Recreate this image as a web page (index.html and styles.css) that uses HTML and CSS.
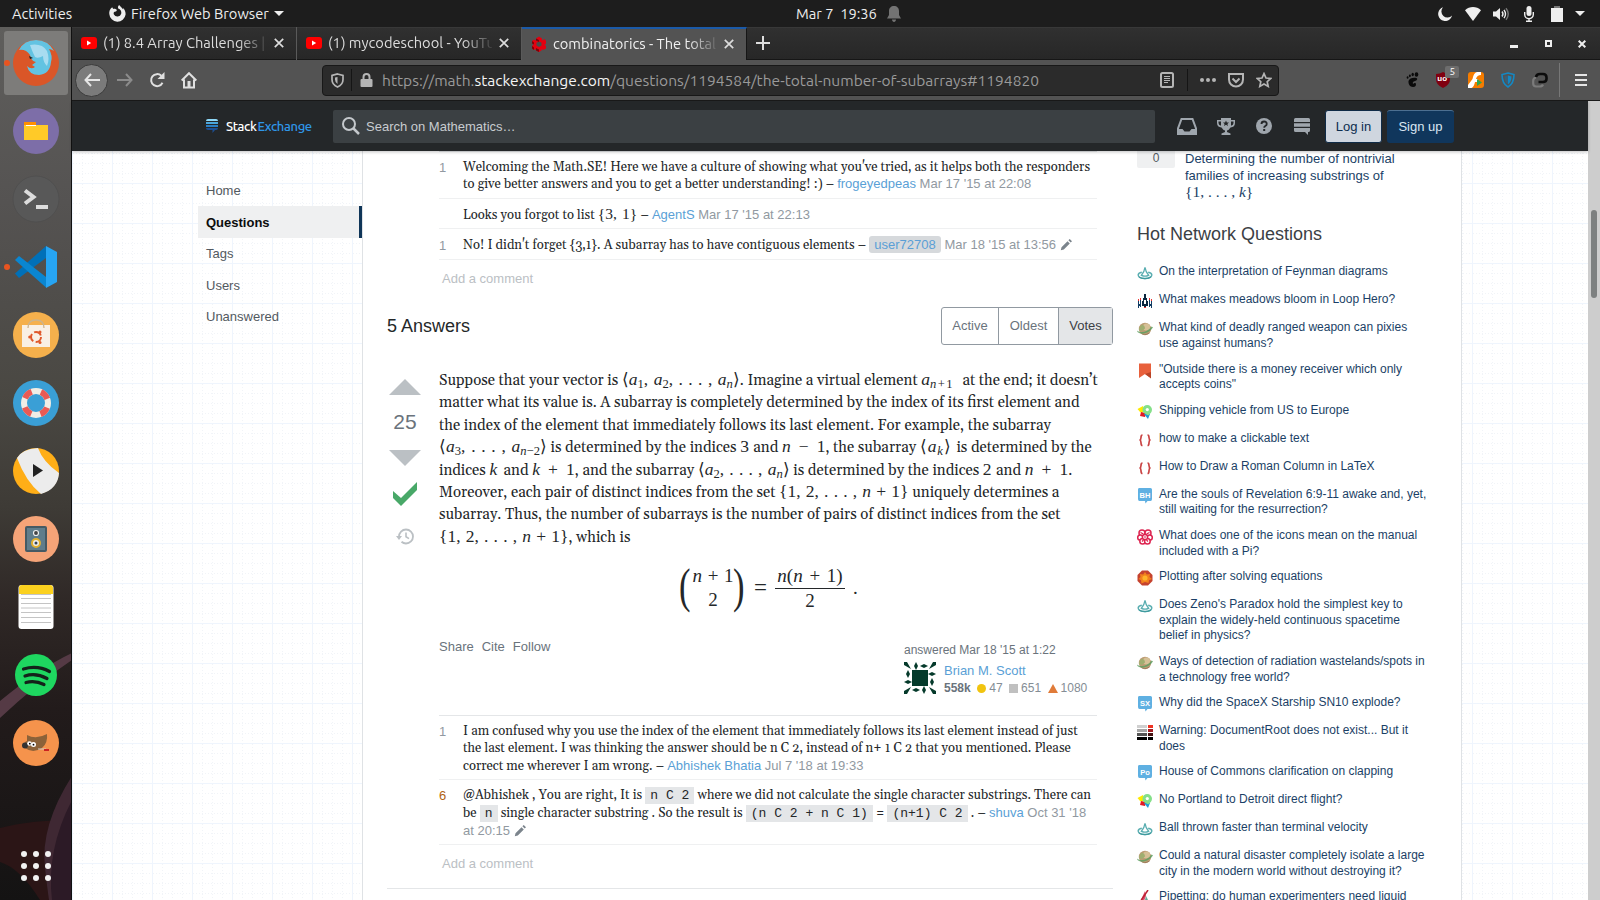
FILE: index.html
```html
<!DOCTYPE html>
<html lang="en">
<head>
<meta charset="utf-8">
<title>combinatorics - The total number of subarrays</title>
<link rel="stylesheet" href="styles.css">
</head>
<body>
<svg class="defs" width="0" height="0">
  <defs>
    <symbol id="i-yt" viewBox="0 0 16 12"><rect width="16" height="12" rx="3" fill="#f00"/><path d="M6 3.6v4.8L10.2 6z" fill="#fff"/></symbol>
    <symbol id="i-x" viewBox="0 0 10 10"><path d="M.8.8l8.4 8.4M9.2.8L.8 9.2" stroke="#dcdcdc" stroke-width="1.7" fill="none"/></symbol>
    <symbol id="i-pencil" viewBox="0 0 12 12"><path d="M.8 11.200l.7-3L7.500 2.200l2.300 2.300-6 6zM8.400 1.300L9.700 0 12 2.300l-1.300 1.300z" fill="#7b848c"/></symbol>
    <symbol id="i-phys" viewBox="0 0 16 16"><path d="M4.800 7.300C2.500 7.800 1.200 8.800 1.200 10c0 2 3 3.500 6.800 3.500s6.800-1.500 6.800-3.500c0-1.200-1.300-2.200-3.600-2.700" fill="none" stroke="#5aaeb1" stroke-width="1.500"/><path d="M4.400 10.300C6.500 8 7.600 5 8 2.300c.4 2.700 1.500 5.700 3.600 8-2.200 1-5 1-7.200 0z" fill="#fff" stroke="#5aaeb1" stroke-width="1.300"/><path d="M2 12c3 2.200 9 2.200 12 0" fill="none" stroke="#3f9a9e" stroke-width="1.200"/></symbol>
    <symbol id="i-game" viewBox="0 0 16 16"><path d="M7 1h2v4h1v3h1v5H9v1H7v-1H5V8h1V5h1z" fill="#0b2740"/><path d="M1 8h1v3h1V7h1v7H3v-1H2v2H1zM15 8h-1v3h-1V7h-1v7h1v-1h1v2h1z" fill="#123c63"/><path d="M7 14h2v1H7zM3 5h1v2H3zM12 5h1v2h-1zM1 6h1v2H1zM14 6h1v2h-1z" fill="#e33"/><path d="M7 7h2v4H7z" fill="#fff"/></symbol>
    <symbol id="i-planet" viewBox="0 0 16 16"><circle cx="8" cy="8" r="6.200" fill="#bd9c74"/><circle cx="9.500" cy="6" r="3.600" fill="#d6c096"/><path d="M5 3.500q3 1 3 4l-3 2.500-3.200-1q0-3 3.200-5.500z" fill="#9fae70"/><path d="M0 9.500c4 3 11 1.500 14.500-4l1.500.8C13.500 11 7 14 2 12q-2-1-2-2.500z" fill="#5f9f62" opacity=".85"/><path d="M4 12.600c3 2 7 1.500 9-1-3 1.700-6 2-9 1z" fill="#8c6d50"/></symbol>
    <symbol id="i-book" viewBox="0 0 16 16"><path d="M2 .5h12V15l-6-4-6 4z" fill="#e8603c"/><path d="M8 11l6-2v6.500z" fill="#b94427"/></symbol>
    <symbol id="i-travel" viewBox="0 0 16 16"><path d="M.5 5L6 2l1 6-3.500.500z" fill="#fde900"/><path d="M4 8l5 1-1 4-5-1z" fill="#e31b23"/><path d="M7 10h6l-2 5z" fill="#1f9ad6"/><path d="M10.300 1a4.700 4.700 0 014.700 4.700c0 2.500-2 4-3.500 5.500C9 10.500 5.500 9 5.500 5.700A4.800 4.800 0 0110.300 1z" fill="#85e08a"/><circle cx="10.300" cy="5.600" r="1.600" fill="#fff"/></symbol>
    <symbol id="i-tex" viewBox="0 0 16 16"><path d="M5.500 3C4 3 4 4 4 5.500S4 7.700 2.600 8C4 8.300 4 9.500 4 10.700S4 13.500 5.500 13.500M10.500 3C12 3 12 4 12 5.500s0 2.200 1.400 2.500C12 8.300 12 9.500 12 10.700s0 2.800-1.500 2.800" fill="none" stroke="#c94444" stroke-width="1.700"/></symbol>
    <symbol id="i-bubble" viewBox="0 0 16 16"><path d="M2 0h11.500q1.500 0 1.500 1.500V11q0 2-1.500 2H10.500L8.500 15.500 8 13H2.500Q1 13 1 11V1.500Q1 0 2 0z" fill="#5fb0e2"/></symbol>
    <symbol id="i-pi" viewBox="0 0 16 16"><g fill="#fff" stroke="#dd2450" stroke-width="1.500"><circle cx="5" cy="4" r="3"/><circle cx="11" cy="4" r="3"/><circle cx="3.300" cy="8.500" r="2.600"/><circle cx="12.700" cy="8.500" r="2.600"/><circle cx="5.600" cy="12.200" r="2.800"/><circle cx="10.400" cy="12.200" r="2.800"/><circle cx="8" cy="8" r="2.600"/></g><path d="M3.500 3.500l3 1.500M12.500 3.500l-3 1.500M7 8h2M5 12.500l1.500-1.500M11 12.500L9.500 11" stroke="#dd2450" stroke-width="1.200"/></symbol>
    <symbol id="i-mma" viewBox="0 0 16 16"><path d="M5 .5h6L15.500 5v6L11 15.500H5L.5 11V5z" fill="#c5422e"/><path d="M8 2l1.800 2.400L13 4l-.5 3L15 9l-3 1.200L11.500 13 8 12l-3.500 1.500L4 10.200 1.500 9l2-2L3 4l3.200.4z" fill="#f2811d"/><circle cx="8" cy="8" r="2.600" fill="#fdb32b"/></symbol>
    <symbol id="i-sf" viewBox="0 0 16 16"><path d="M0 1h10v3H0z" fill="#d0d0d0"/><path d="M11 1h5v3h-5z" fill="#e32"/><path d="M0 5h10v3H0z" fill="#a5a5a5"/><path d="M11 5h5v3h-5z" fill="#a01c22"/><path d="M0 9h10v3H0z" fill="#555"/><path d="M11 9h5v3h-5z" fill="#411"/><path d="M0 13h10v3H0zM11 13h5v3h-5z" fill="#000"/></symbol>
    <symbol id="i-bio" viewBox="0 0 16 16"><path d="M8 1l1 5-2 5-4 1z" fill="#e05070"/><path d="M9 6l4 8H7z" fill="#6a9"/><path d="M11 0L3 12" stroke="#b23" stroke-width="1.500"/></symbol>
  </defs>
</svg>

<div class="topbar">
  <span class="act">Activities</span>
  <svg class="ffx" width="17" height="17" viewBox="0 0 17 17"><path d="M3.200 2.200C.6 4 0 6.500.3 9a8.200 8.200 0 0016.300.6c.2-2.600-.8-5-2.600-6.600l.2 1.500C13 2.500 11 1.600 10.200 0 9 .8 8.800 2 9.200 3.500c2.300.8 3.600 3 3 5.200a4 4 0 01-7.300.8C4 7.500 5.500 6.300 7 6.600l1-1.500C6.500 3.500 5 3.800 4.200 4z" fill="#eee"/></svg>
  <span class="app">Firefox Web Browser</span>
  <svg class="caret" width="10" height="5"><path d="M0 0h10L5 5z" fill="#eee"/></svg>
  <span class="clock">Mar 7&nbsp; 19:36</span>
  <svg class="bell" width="14" height="16" viewBox="0 0 14 16"><path d="M7 0c3 0 5 2 5 5v4l2 3.500H0L2 9V5c0-3 2-5 5-5zM5 13.500h4C9 15 8 16 7 16s-2-1-2-2.500z" fill="#737373"/></svg>
  <div class="tray">
    <svg width="14" height="14" viewBox="0 0 14 14"><path d="M5 .3A7 7 0 1014 8.500 5 5 0 015 .3z" fill="#eee"/></svg>
    <svg class="t2" width="16" height="14" viewBox="0 0 16 14"><path d="M0 3.200C4.500-1 11.500-1 16 3.200L8 14z" fill="#eee"/></svg>
    <svg class="t3" width="16" height="14" viewBox="0 0 16 14"><path d="M0 4.500h3L7 1v12L3 9.500H0z" fill="#eee"/><path d="M9 4.500q2 2.500 0 5M11 2.800q3 4.200 0 8.400" stroke="#eee" stroke-width="1.400" fill="none"/><path d="M13 1.200q4.500 5.800 0 11.600" stroke="#777" stroke-width="1.400" fill="none"/></svg>
    <svg class="t4" width="10" height="16" viewBox="0 0 10 16"><rect x="2.500" width="5" height="10" rx="2.500" fill="#eee"/><path d="M.7 6v2.500a4.300 4.300 0 008.600 0V6M5 12.500V15M2 15.300h6" stroke="#eee" stroke-width="1.400" fill="none"/></svg>
    <svg class="t5" width="12" height="16" viewBox="0 0 12 16"><path d="M3 0h6v2H3z" fill="#777"/><path d="M0 2h12v14H0z" fill="#eee"/></svg>
    <svg class="t6" width="10" height="5"><path d="M0 0h10L5 5z" fill="#eee"/></svg>
  </div>
</div>

<div class="desk">
  <div class="dock">
    <svg width="72" height="873" viewBox="0 27 72 873">
      <defs><linearGradient id="dk" x1="0" y1="0" x2="0" y2="1"><stop offset="0" stop-color="#5f5e5c"/><stop offset=".2" stop-color="#555352"/><stop offset=".42" stop-color="#4a4843"/><stop offset=".55" stop-color="#3e3b36"/><stop offset=".66" stop-color="#2f2826"/><stop offset=".78" stop-color="#221b1b"/><stop offset="1" stop-color="#141313"/></linearGradient></defs>
      <rect y="27" width="72" height="873" fill="url(#dk)"/>
      <path d="M0 701Q40 668 72 653v7Q36 684 0 718z" fill="#553a45"/>
      <path d="M0 828Q30 820 72 820v80H40Q20 868 0 862z" fill="#2b1516"/>
      <path d="M72 776Q40 826 45 868q2 18 4 32h23z" fill="#3f2833"/>
      <path d="M72 800Q46 850 52 900h20z" fill="#2c1a26"/>
      <path d="M71.500 27v873" stroke="#111" stroke-width="1"/>
      <rect x="4" y="31" width="64" height="64" rx="3" fill="#7d7c7a"/>
      <circle cx="7" cy="63" r="3" fill="#e95420"/><circle cx="7" cy="267" r="3" fill="#e95420"/>
      <circle cx="36" cy="63" r="23" fill="#da5628"/>
      <path d="M19 50q5-10 17-10 12 0 18 11-3-2-5-2 4 7 2 13-1 12-12 13-10 0-12-9 4 4 8 1l-3-2 4-3q-5-1-6-7-4-6-11-5z" fill="#62c3e2"/><path d="M30 45q12-2 17 6 3 8 0 15-4-4-4-10-5 3-8 1-3-6-5-12z" fill="#a8dcf0"/><path d="M29 56l4 2-3 1z" fill="#222"/>
      <circle cx="36" cy="131" r="23" fill="#7d6ea8"/><path d="M24 122h12v3h12v15H24z" fill="#ffca28"/><path d="M24 122h12v3H24z" fill="#ff8f00"/><path d="M26 125h10v1H26z" fill="#fff"/>
      <circle cx="36" cy="199" r="23" fill="#585858" stroke="#4b4b4b" stroke-width=".6"/><path d="M25 190.500l8.500 6.500L25 203.500" fill="none" stroke="#ddd" stroke-width="4"/><path d="M36 205h12v4H36z" fill="#ddd"/>
      <path d="M46 246L15 273.500l4 4.500 27-20z" fill="#0070b8"/><path d="M15 260l4-4 27 21v10.500z" fill="#0a86d1"/><path d="M46 246l11 6v30l-11 6z" fill="#27a5f3"/>
      <circle cx="36" cy="335" r="23" fill="#f5b04c"/><path d="M22 325h28v22H22z" fill="#f9f0e4"/><path d="M28 328q0-8 8-8t8 8" fill="none" stroke="#cdb48c" stroke-width="1.300"/><circle cx="36" cy="337" r="5" fill="none" stroke="#e0592a" stroke-width="2" stroke-dasharray="8 2.500"/><circle cx="29.700" cy="337" r="1.500" fill="#e0592a"/><circle cx="40" cy="332" r="1.500" fill="#e0592a"/><circle cx="40" cy="342.500" r="1.500" fill="#e0592a"/>
      <circle cx="36" cy="403" r="23" fill="#3a9fd6"/><circle cx="36" cy="403" r="12" fill="none" stroke="#f0ede6" stroke-width="6"/><circle cx="36" cy="403" r="12" fill="none" stroke="#ea5a55" stroke-width="6" stroke-dasharray="9.425 9.425" stroke-dashoffset="-4.700"/>
      <circle cx="36" cy="471" r="23" fill="#ffae17"/><path d="M17 458q5-9 21-10 5 14 21 25-1 16-18 21-15-12-24-36z" fill="#ececec"/><path d="M33 464l10 6.500-10 6.500z" fill="#222"/>
      <circle cx="36" cy="539" r="23" fill="#f5a478"/><rect x="25" y="526" width="22" height="26" rx="2" fill="#455a64"/><rect x="27" y="528" width="18" height="22" fill="#607d8b"/><circle cx="36" cy="533" r="2.500" fill="#444" stroke="#eee" stroke-width="1.200"/><circle cx="36" cy="543" r="4" fill="#eee" stroke="#e0b030" stroke-width="2"/><circle cx="36" cy="543" r="1.500" fill="#345"/>
      <rect x="18.500" y="585" width="35" height="44" rx="3" fill="#fff"/><path d="M19 594v-6q0-3 3-3h28q3 0 3 3v6z" fill="#fbd11f"/><path d="M21 594.500h30M21 598.500h30M21 603.500h30M21 608h30M21 612.500h30M21 617.500h30M21 622.500h30" stroke="#c4c4c4"/>
      <circle cx="36" cy="675" r="21" fill="#1ed760"/><path d="M23.500 669q14-4 26 2.500M25 676q11-3.500 22 2.500M26 682.500q9-2.500 18 2" fill="none" stroke="#14221a" stroke-width="3.200" stroke-linecap="round"/>
      <circle cx="36" cy="743" r="23" fill="#f5934c"/><path d="M27 735q9 5 20-1 1 9-5 14-9 6-17 0-2-6 2-7z" fill="#8c6239"/><circle cx="25" cy="745.500" r="3" fill="#333"/><circle cx="29.500" cy="743.500" r="2.300" fill="#fff"/><circle cx="33.500" cy="744.500" r="2.500" fill="#fff"/><circle cx="29.800" cy="743.700" r=".9"/><circle cx="33.500" cy="744.700" r=".9"/><path d="M38 749h8" stroke="#ccc"/><path d="M44 750h5" stroke="#c22" stroke-width="2"/>
      <g fill="#f2f2f2"><circle cx="24" cy="854" r="3"/><circle cx="36" cy="854" r="3"/><circle cx="48" cy="854" r="3"/><circle cx="24" cy="866" r="3"/><circle cx="36" cy="866" r="3"/><circle cx="48" cy="866" r="3"/><circle cx="24" cy="878" r="3"/><circle cx="36" cy="878" r="3"/><circle cx="48" cy="878" r="3"/></g>
    </svg>
  </div>

  <div class="browser">
    <div class="tabs">
      <div class="tab"><svg width="16" height="12"><use href="#i-yt"/></svg><span class="tt">(1) 8.4 Array Challenges |</span><svg width="10" height="10"><use href="#i-x"/></svg></div>
      <div class="tab"><svg width="16" height="12"><use href="#i-yt"/></svg><span class="tt">(1) mycodeschool - YouTu</span><svg width="10" height="10"><use href="#i-x"/></svg></div>
      <div class="tab on"><svg width="16" height="16" viewBox="0 0 16 16"><path d="M8 .5l3 2v2l2.500-1.500L15 5v3l-1.500.5L15 10v2.500L12 14l-1.500-1v1.500L8 16l-3-1.500V13l-2 1-2-1.500V10l1.500-1.500L1 7.500V5l2-1.500 2 1v-2z" fill="#e4000f"/><path d="M8 5.500l2.500 1.300v2.700L8 11 5.500 9.500V6.800z" fill="#4a4a4a"/><path d="M5 2.500L8 4v2L5 4.500zM1 5l2 1.500v2L1 7.500zM1 10l2 1.500V14l-2-1.500zM5 12l3 1.500V16l-3-1.500z" fill="#7d0008"/></svg><span class="tt">combinatorics - The total</span><svg width="10" height="10"><use href="#i-x"/></svg></div>
      <svg class="plus" width="14" height="14"><path d="M7 0v14M0 7h14" stroke="#ddd" stroke-width="2"/></svg>
      <div class="wins">
        <svg width="8" height="3"><path d="M0 0h8v3H0z" fill="#eee"/></svg>
        <svg width="7" height="7"><path d="M1 1h5v5H1z" fill="none" stroke="#eee" stroke-width="2"/></svg>
        <svg width="8" height="8"><path d="M.7.7l6.600 6.600M7.300.7L.7 7.300" stroke="#eee" stroke-width="2"/></svg>
      </div>
    </div>
    <div class="tools">
      <span class="back"><svg width="16" height="14" viewBox="0 0 16 14"><path d="M7 1L1.500 7 7 13M1.500 7H16" fill="none" stroke="#e6e6e6" stroke-width="2"/></svg></span>
      <svg class="fwd" width="16" height="14" viewBox="0 0 16 14"><path d="M9 1l5.500 6L9 13M14.500 7H0" fill="none" stroke="#8b8b8b" stroke-width="2"/></svg>
      <svg class="rel" width="16" height="16" viewBox="0 0 16 16"><path d="M13.500 10.800A6 6 0 1112.300 3.800" fill="none" stroke="#e0e0e0" stroke-width="2"/><path d="M15.500 0v7H8.500z" fill="#e0e0e0"/></svg>
      <svg class="home" width="16" height="17" viewBox="0 0 16 17"><path d="M.7 8.500L8 1.200l7.300 7.300M3 7.500V15.500h10V7.500" fill="none" stroke="#e0e0e0" stroke-width="2"/><path d="M6.500 9h3v7h-3z" fill="#e0e0e0"/></svg>
      <div class="url">
        <svg class="sh" width="13" height="15" viewBox="0 0 13 15"><path d="M6.500 1L12 2.500v4q0 5-5.500 7.500Q1 11.500 1 6.500v-4z" fill="none" stroke="#b5b5b5" stroke-width="1.700"/><path d="M6.500 4v7Q4 9.500 4 6.500v-2z" fill="#b5b5b5"/></svg>
        <i class="sep"></i>
        <svg class="lk" width="13" height="14" viewBox="0 0 13 14"><path d="M3.500 7V4a3 3 0 016 0v3" fill="none" stroke="#b5b5b5" stroke-width="2"/><rect x=".5" y="6" width="12" height="8" rx="1" fill="#b5b5b5"/></svg>
        <span class="addr">https://math.<b>stackexchange.com</b>/questions/1194584/the-total-number-of-subarrays#1194820</span>
        <svg class="rd" width="14" height="16" viewBox="0 0 14 16"><rect x="1" y="1" width="12" height="14" rx="1.500" fill="none" stroke="#b5b5b5" stroke-width="2"/><path d="M4 4.500h6M4 6.500h6M4 8.500h6M4 10.500h4" stroke="#b5b5b5"/></svg>
        <i class="sep s2"></i>
        <svg class="dt" width="16" height="4"><g fill="#b5b5b5"><circle cx="2" cy="2" r="2"/><circle cx="8" cy="2" r="2"/><circle cx="14" cy="2" r="2"/></g></svg>
        <svg class="pk" width="16" height="15" viewBox="0 0 16 15"><path d="M1 1h14v5.500a7 7 0 01-14 0z" fill="none" stroke="#b5b5b5" stroke-width="2"/><path d="M4.500 5.500L8 9l3.500-3.500" fill="none" stroke="#b5b5b5" stroke-width="2"/></svg>
        <svg class="st" width="16" height="16" viewBox="0 0 16 16"><path d="M8 1.600l2 4.400 4.700.5-3.500 3.200 1 4.700L8 12l-4.200 2.400 1-4.700L1.300 6.500 6 6z" fill="none" stroke="#b5b5b5" stroke-width="1.700"/></svg>
      </div>
      <div class="ext">
        <svg width="13" height="16" viewBox="0 0 13 16"><g fill="#0a0a0a"><ellipse cx="10.500" cy="2.500" rx="1.800" ry="2.300"/><ellipse cx="6.700" cy="2.500" rx="1.200" ry="1.700"/><ellipse cx="3.900" cy="3.800" rx="1" ry="1.400"/><ellipse cx="1.600" cy="5.500" rx=".9" ry="1.200"/><path d="M10.500 6C8 5 3 6 2.500 9c-.3 3 1.500 6 4.500 6 2.500 0 3.500-1.800 2.800-3.500-.5-1-2-.3-2.500.5C6 11 7 9.500 9 9c2-.6 3-2.300 1.500-3z"/></g></svg>
        <span class="ub"><svg width="14" height="16" viewBox="0 0 14 16"><path d="M7 0q3 2 7 2v5q0 6-7 9-7-3-7-9V2q4 0 7-2z" fill="#800010"/></svg><em>uo</em><b>5</b></span>
        <svg width="16" height="16" viewBox="0 0 16 16"><rect width="16" height="16" rx="3" fill="#f57c00"/><path d="M13 0H9Q5.500 1 4.500 7L0 13v3h3.500Q6 15 7 10h3V7H8q1-4 5-4z" fill="#fff"/><path d="M9 7l5 3.500L9 14z" fill="#2ea44f"/></svg>
        <svg width="14" height="16" viewBox="0 0 14 16"><path d="M7 1l6 1.500q0 9-6 12.500-6-3.500-6-12.500z" fill="none" stroke="#1488c4" stroke-width="1.600"/><path d="M7 3.500l3.500 1q0 5.500-3.500 8z" fill="#1488c4"/><path d="M7 3.500l-3.500 1q0 5.500 3.500 8z" fill="#3a6078"/></svg>
        <svg width="16" height="16" viewBox="0 0 16 16"><path d="M4 5.500Q1.200 6 1.200 9v2.500q0 3 3 3h3.500q2.500 0 3.300-2" fill="none" stroke="#7b7b7b" stroke-width="2.200"/><path d="M4 5Q4.500 2 8 2h3q3.500 0 3.500 3.500v1.500q0 3-3.500 3H6.500" fill="none" stroke="#0c0c0c" stroke-width="2.600"/></svg>
      </div>
      <i class="bar"></i>
      <svg class="menu" width="12" height="12"><path d="M0 1h12M0 6h12M0 11h12" stroke="#e6e6e6" stroke-width="2"/></svg>
    </div>

    <div class="page">
      <div class="main">
        <div class="sehead">
          <svg class="selogo" width="12" height="14" viewBox="0 0 12 14"><path d="M0 2q0-2 2-2h8q2 0 2 2z" fill="#8fd8f7"/><path d="M0 3h12v2H0z" fill="#4aa7dd"/><path d="M0 6h12v2H0z" fill="#2b7fc4"/><path d="M0 9h12q0 2-2 2H9l-2.500 3v-3H2q-2 0-2-2z" fill="#1c4f93"/></svg>
          <span class="brand"><span>Stack</span><b>Exchange</b></span>
          <div class="search"><svg width="18" height="18" viewBox="0 0 18 18"><circle cx="7" cy="7" r="6" fill="none" stroke="#c4c8cc" stroke-width="2"/><path d="M11.500 11.500l5.500 5.500" stroke="#c4c8cc" stroke-width="2.500"/></svg><span>Search on Mathematics…</span></div>
          <div class="hic">
            <svg width="20" height="17" viewBox="0 0 20 17"><path d="M4.500 1h11L19 10.500V16H1v-5.500z" fill="none" stroke="#9fa6ad" stroke-width="2"/><path d="M1 11h4.500l2 2.500h5l2-2.500H19v5.500H1z" fill="#9fa6ad"/></svg>
            <svg width="18" height="17" viewBox="0 0 18 17"><path d="M4 0h10v2h4v3q0 4-4.500 4.500Q12 12 10 12.500V14l3.500 1.500V17h-9v-1.500L8 14v-1.500Q6 12 4.500 9.500 0 9 0 5V2h4zM1.500 3.500V5q0 2 2.500 2.700V3.500zm15 0H14v4.200q2.500-.7 2.500-2.700z" fill="#9fa6ad" fill-rule="evenodd"/><path d="M9 2.500l.9 2h2.100l-1.600 1.400.6 2.100-2-1.200L7 8l.6-2.100L6 4.500h2.100z" fill="#242729"/></svg>
            <svg class="h3" width="16" height="16" viewBox="0 0 16 16"><circle cx="8" cy="8" r="8" fill="#9fa6ad"/><path d="M5.500 6q0-2.500 2.600-2.500T10.700 6q0 1.300-1.400 2-1.100.6-1.100 1.800" fill="none" stroke="#242729" stroke-width="1.900"/><path d="M7.200 11h2v2h-2z" fill="#242729"/></svg>
            <svg class="h4" width="16" height="17" viewBox="0 0 16 17"><path d="M0 4V1.500Q0 0 1.500 0h13Q16 0 16 1.500V4zM0 5.200h16v3.600H0zM0 10h16v2.500q0 1.500-1.500 1.500H14v3l-3-3H1.500Q0 14 0 12.500z" fill="#9fa6ad"/></svg>
          </div>
          <span class="btn login">Log in</span><span class="btn signup">Sign up</span>
        </div>

        <div class="view">
          <div class="nav">
            <a>Home</a><a class="cur">Questions</a><a>Tags</a><a>Users</a><a>Unanswered</a>
          </div>
          <div class="content">
            <div class="mid">
              <div class="comments first">
                <div class="c"><i>1</i><div>
                  <p>Welcoming the Math.SE! Here we have a culture of showing what you've tried, as it helps both the responders</p>
                  <p>to give better answers and you to get a better understanding! :) – <a>frogeyedpeas</a> <u>Mar 17 '15 at 22:08</u></p></div></div>
                <div class="c"><i></i><div><p>Looks you forgot to list <span class="m w39">{3, 1}</span> – <a>AgentS</a> <u>Mar 17 '15 at 22:13</u></p></div></div>
                <div class="c"><i>1</i><div><p>No! I didn't forget {3,1}. A subarray has to have contiguous elements – <a class="pill">user72708</a> <u>Mar 18 '15 at 13:56</u> <svg width="12" height="12"><use href="#i-pencil"/></svg></p></div></div>
              </div>
              <div class="add">Add a comment</div>
              <div class="anshead"><h2>5 Answers</h2><div class="sort"><span>Active</span><span>Oldest</span><span class="sel">Votes</span></div></div>
              <div class="post">
                <div class="vote">
                  <svg class="v1" width="32" height="16"><path d="M0 16L16 0l16 16z" fill="#bbc0c4"/></svg>
                  <b>25</b>
                  <svg class="v2" width="32" height="16"><path d="M0 0h32L16 16z" fill="#bbc0c4"/></svg>
                  <svg class="v3" width="24" height="24" viewBox="0 0 24 24"><path d="M0 9v7l8 8L24 8V0L8 16z" fill="#48a868"/></svg>
                  <svg class="v4" width="18" height="17" viewBox="0 0 18 17"><path d="M3 8.500A7 7 0 1110 15.500q-2.500 0-4.500-1.700" fill="none" stroke="#bbc0c4" stroke-width="1.800"/><path d="M0 8h6l-3 4z" fill="#bbc0c4"/><path d="M10 4.500v4.200l3 1.900" fill="none" stroke="#bbc0c4" stroke-width="1.600"/></svg>
                </div>
                <div class="body">
                  <p>Suppose that your vector is <span class="m w118"><q>⟨</q><i>a</i><sub>1</sub>, <i>a</i><sub>2</sub>, . . . , <i>a</i><sub><i>n</i></sub><q>⟩</q></span>. Imagine a virtual element <span class="m w35"><i>a</i><sub class="wide"><i>n</i>+1</sub></span>&nbsp; at the end; it doesn’t</p>
                  <p>matter what its value is. A subarray is completely determined by the index of its first element and</p>
                  <p>the index of the element that immediately follows its last element. For example, the subarray</p>
                  <p><span class="m w108"><q>⟨</q><i>a</i><sub>3</sub>, . . . , <i>a</i><sub><i>n</i>−2</sub><q>⟩</q></span> is determined by the indices <span class="m w9">3</span> and <span class="m w43"><i>n</i> − 1</span>, the subarray <span class="m w32"><q>⟨</q><i>a</i><sub><i>k</i></sub><q>⟩</q></span> is determined by the</p>
                  <p>indices <span class="m w10"><i>k</i></span> and <span class="m w42"><i>k</i> + 1</span>, and the subarray <span class="m w92"><q>⟨</q><i>a</i><sub>2</sub>, . . . , <i>a</i><sub><i>n</i></sub><q>⟩</q></span> is determined by the indices <span class="m w9">2</span> and <span class="m w43"><i>n</i> + 1</span>.</p>
                  <p>Moreover, each pair of distinct indices from the set <span class="m w129">{1, 2, . . . , <i>n</i> + 1}</span> uniquely determines a</p>
                  <p>subarray. Thus, the number of subarrays is the number of pairs of distinct indices from the set</p>
                  <p><span class="m w129">{1, 2, . . . , <i>n</i> + 1}</span>, which is</p>
                  <div class="eq">
                    <span class="paren">(</span>
                    <span class="stack"><span><i>n</i> + 1</span><span>2</span></span>
                    <span class="paren">)</span>
                    <span class="eqs">=</span>
                    <span class="frac"><span><i>n</i>(<i>n</i> + 1)</span><span>2</span></span>
                    <span class="dot">.</span>
                  </div>
                  <div class="foot">
                    <div class="acts"><a>Share</a><a>Cite</a><a>Follow</a></div>
                    <div class="card">
                      <div class="when">answered Mar 18 '15 at 1:22</div>
                      <div class="who">
                        <svg width="32" height="32" viewBox="0 0 32 32"><g fill="#053a2b"><path d="M8 8h16v16H8z"/><path id="av" d="M0 0h3l4 7-7-4zM12 0l2 4-2 4-2-4zM16 4l4-2 4 2-4 2z"/><use href="#av" transform="rotate(90 16 16)"/><use href="#av" transform="rotate(180 16 16)"/><use href="#av" transform="rotate(270 16 16)"/></g></svg>
                        <div><a>Brian M. Scott</a><span class="rep"><b>558k</b><svg class="g" width="9" height="9"><circle cx="4.500" cy="4.500" r="4.500" fill="#f1c40f"/></svg>47<svg class="s" width="9" height="9"><path d="M0 0h9v9H0z" fill="#c0c0c0"/></svg>651<svg class="s" width="10" height="9"><path d="M5 0l5 9H0z" fill="#e07b39"/></svg>1080</span></div>
                      </div>
                    </div>
                  </div>
                  <div class="comments second">
                    <div class="c"><i>1</i><div>
                      <p>I am confused why you use the index of the element that immediately follows its last element instead of just</p>
                      <p>the last element. I was thinking the answer should be n C 2, instead of n+ 1 C 2 that you mentioned. Please</p>
                      <p>correct me wherever I am wrong. – <a>Abhishek Bhatia</a> <u>Jul 7 '18 at 19:33</u></p></div></div>
                    <div class="c"><i class="hot">6</i><div>
                      <p>@Abhishek , You are right, It is <code>n C 2</code> where we did not calculate the single character substrings. There can</p>
                      <p>be <code>n</code> single character substring . So the result is <code>(n C 2 + n C 1)</code> = <code>(n+1) C 2</code> . – <a>shuva</a> <u>Oct 31 '18</u></p>
                      <p><u class="wrap">at 20:15</u> <svg width="12" height="12"><use href="#i-pencil"/></svg></p></div></div>
                  </div>
                  <div class="add">Add a comment</div>
                </div>
              </div>
              <div class="rule"></div>
            </div>
            <div class="side">
              <div class="rel1"><span class="num">0</span><span>Determining the number of nontrivial<br>families of increasing substrings of<br><span class="m w68">{1, . . . , <i>k</i>}</span></span></div>
              <h3>Hot Network Questions</h3>
              <ul>
                <li><svg><use href="#i-phys"/></svg><span>On the interpretation of Feynman diagrams</span></li>
                <li><svg><use href="#i-game"/></svg><span>What makes meadows bloom in Loop Hero?</span></li>
                <li><svg><use href="#i-planet"/></svg><span>What kind of deadly ranged weapon can pixies<br>use against humans?</span></li>
                <li><svg><use href="#i-book"/></svg><span>"Outside there is a money receiver which only<br>accepts coins"</span></li>
                <li><svg><use href="#i-travel"/></svg><span>Shipping vehicle from US to Europe</span></li>
                <li><svg><use href="#i-tex"/></svg><span>how to make a clickable text</span></li>
                <li><svg><use href="#i-tex"/></svg><span>How to Draw a Roman Column in LaTeX</span></li>
                <li><svg><use href="#i-bubble"/><text x="8" y="9.500">BH</text></svg><span>Are the souls of Revelation 6:9-11 awake and, yet,<br>still waiting for the resurrection?</span></li>
                <li><svg><use href="#i-pi"/></svg><span>What does one of the icons mean on the manual<br>included with a Pi?</span></li>
                <li><svg><use href="#i-mma"/></svg><span>Plotting after solving equations</span></li>
                <li><svg><use href="#i-phys"/></svg><span>Does Zeno's Paradox hold the simplest key to<br>explain the widely-held continuous spacetime<br>belief in physics?</span></li>
                <li><svg><use href="#i-planet"/></svg><span>Ways of detection of radiation wastelands/spots in<br>a technology free world?</span></li>
                <li><svg><use href="#i-bubble"/><text x="8" y="9.500">SX</text></svg><span>Why did the SpaceX Starship SN10 explode?</span></li>
                <li><svg><use href="#i-sf"/></svg><span>Warning: DocumentRoot does not exist... But it<br>does</span></li>
                <li><svg><use href="#i-bubble"/><text x="8" y="9.500">Po</text></svg><span>House of Commons clarification on clapping</span></li>
                <li><svg><use href="#i-travel"/></svg><span>No Portland to Detroit direct flight?</span></li>
                <li><svg><use href="#i-phys"/></svg><span>Ball thrown faster than terminal velocity</span></li>
                <li><svg><use href="#i-planet"/></svg><span>Could a natural disaster completely isolate a large<br>city in the modern world without destroying it?</span></li>
                <li><svg><use href="#i-bio"/></svg><span>Pipetting: do human experimenters need liquid</span></li>
              </ul>
            </div>
          </div>
        </div>
      </div>
      <div class="scroll"><i></i></div>
    </div>
  </div>
</div>
</body>
</html>
```
FILE: styles.css
```css
* { box-sizing: border-box; }
body { margin: 0; width: 1600px; height: 900px; overflow: hidden; display: flex; flex-direction: column; font-family: "Liberation Sans", Arial, sans-serif; font-size: 13px; color: #242729; white-space: nowrap; background: #1d1d1d; }
p, h2, h3, ul { margin: 0; padding: 0; font-weight: 400; }
svg { flex: none; display: block; }
.defs { position: absolute; }
a, u { text-decoration: none; }

/* desktop top bar */
.topbar { height: 27px; flex: none; background: #1d1d1d; color: #eee; font: 14.667px/27px Ubuntu, "Noto Sans", sans-serif; display: flex; align-items: center; }
.act { margin-left: 12px; width: 97px; }
.app { margin-left: 5px; width: 143px; }
.clock { margin-left: 512px; width: 91px; }
.tray { margin-left: auto; margin-right: 15px; display: flex; align-items: center; }
.t2 { margin-left: 13px; }
.t3 { margin-left: 12px; }
.t4 { margin-left: 15px; }
.t5 { margin-left: 17px; }
.t6 { margin-left: 12px; }

.desk { flex: 1; display: flex; min-height: 0; }
.dock { width: 72px; flex: none; }
.browser { flex: 1; display: flex; flex-direction: column; min-width: 0; }

/* browser chrome */
.tabs { height: 33px; flex: none; display: flex; align-items: center; background: linear-gradient(#303030, #272727); border-top: 1px solid #383838; border-bottom: 1px solid #161616; font: 14.667px/30px Ubuntu, "Noto Sans", sans-serif; color: #ddd; }
.tab { width: 225px; height: 33px; margin-top: -1px; flex: none; display: flex; align-items: center; padding: 0 12px 0 9px; border-right: 1px solid #5a5a5a; }
.tab.on { margin-bottom: -1px; padding-top: 0; padding-bottom: 1px; background: #535353; border-top: 2px solid #1b5aa8; border-right: 1px solid #161616; color: #f0f0f0; }
.tt { flex: 1; margin: 0 7px 0 6px; overflow: hidden; -webkit-mask-image: linear-gradient(90deg, #000 82%, transparent 102%); }
.plus { margin-left: 9px; margin-bottom: 1px; }
.wins { margin-left: auto; margin-right: 14px; width: 76px; display: flex; justify-content: space-between; align-items: center; }
.wins svg:first-child { margin-top: 6px; }

.tools { height: 41px; flex: none; display: flex; align-items: center; background: #535353; border-bottom: 1px solid #1a1a1a; }
.back { width: 33px; height: 33px; margin-left: 3px; border-radius: 50%; background: #7b7b7b; border: 1px solid #3b3b3b; display: grid; place-items: center; }
.fwd { margin-left: 9px; }
.rel, .home { margin-left: 16px; }
.url { margin-left: 125px; width: 957px; height: 31px; flex: none; background: #2b2b2b; border: 1px solid #181818; border-radius: 4px; display: flex; align-items: center; color: #9a9a9a; font: 15.550px/29px Ubuntu, "Noto Sans", sans-serif; }
.url b { font-weight: 400; color: #f5f5f5; }
.sh { margin-left: 8px; }
.sep { width: 1px; height: 22px; background: #151515; margin-left: 7px; }
.lk { margin-left: 8px; }
.addr { margin-left: 9px; width: 778px; padding-top: 1px; }
.s2 { margin-left: 13px; }
.dt, .pk, .st { margin-left: 12px; }
.ext { margin-left: 127px; width: 142px; display: flex; justify-content: space-between; align-items: center; }
.ub { position: relative; width: 14px; }
.ub em { position: absolute; left: 1px; top: 2px; font: bold 8px/10px "Liberation Sans", sans-serif; color: #fff; }
.ub b { position: absolute; left: 9px; top: -6px; width: 14px; height: 12px; background: #6d6d6d; border-radius: 2px; color: #fff; font: 10px/12px Ubuntu, "Noto Sans", sans-serif; text-align: center; }
.bar { width: 1px; height: 34px; background: #777; margin-left: 11px; }
.menu { margin-left: 15px; }

.page { flex: 1; min-height: 0; display: flex; }
.main { flex: 1; display: flex; flex-direction: column; min-width: 0; }
.scroll { width: 12px; background: #cdcdcd; padding: 109px 3px 0; }
.scroll i { display: block; width: 6px; height: 88px; border-radius: 3px; background: #7d8080; }

/* site header */
.sehead { height: 50px; flex: none; background: #242729; display: flex; align-items: center; position: relative; box-shadow: 0 1px 3px rgba(12, 13, 14, .25); }
.selogo { margin-left: 134px; }
.brand { margin-left: 8px; width: 107px; color: #fff; font: 500 13px/16px Ubuntu, "Noto Sans", sans-serif; letter-spacing: -.35px; padding-bottom: 1px; }
.brand b { font-weight: 500; color: #2f96e8; margin-left: 1px; }
.search { width: 822px; height: 33px; background: #3b4043; border-radius: 2px; display: flex; align-items: center; gap: 6px; padding-left: 9px; color: #c8ccd0; }
.hic { margin-left: 22px; width: 133px; display: flex; align-items: center; gap: 20px; }
.hic .h3 { margin-left: 1px; }
.hic .h4 { margin-left: auto; }
.btn { height: 33px; border-radius: 3px; line-height: 32px; text-align: center; }
.login { width: 57px; margin-left: 15px; background: #cfd6df; color: #0c2d4e; border: 1px solid #0f2b47; line-height: 31px; }
.signup { width: 67px; margin-left: 5px; background: #10365c; color: #d9e6f2; border-top: 1px solid #4c6f91; }

/* graph-paper page background, 40px major grid with dotted 10px steps */
.view { flex: 1; min-height: 0; overflow: hidden; display: flex; background: #fff url("data:image/svg+xml,%3Csvg xmlns='http://www.w3.org/2000/svg' width='40' height='40' shape-rendering='crispEdges'%3E%3Cg stroke='%23f1f4f8' stroke-dasharray='1 2'%3E%3Cpath d='M1 10.500h39M1 20.500h39M1 30.500h39M10.500 1v39M20.500 1v39M30.500 1v39'/%3E%3C/g%3E%3Cpath d='M0 .5h40M.5 0v40' stroke='%23eff5fd'/%3E%3C/svg%3E") 0 32px; }
.nav { width: 290px; flex: none; padding: 23px 0 0 126px; color: #525960; }
.nav a { display: block; height: 31.300px; line-height: 33px; padding-left: 8px; }
.nav a:first-child { height: 32px; }
.nav .cur { height: 32px; line-height: 33px; background: #eff0f1; border-right: 3px solid #0f3558; font-weight: 700; color: #0c0d0e; }
.nav .cur + a { margin-top: -.700px; }

.content { width: 1100px; flex: none; background: #fff; border: solid #dfe2e5; border-width: 0 1px; padding-left: 24px; display: flex; }
.mid { width: 726px; flex: none; }

/* comments */
.comments { border-top: 1px solid #e4e6e8; width: 658px; }
.comments.first { margin-left: 52px; }
.c { display: flex; border-bottom: 1px solid #eff0f1; }
.first .c { padding: 8px 0 4.400px; }
.first .c:first-child { padding: 7px 0 4px; }
.second .c { padding: 7px 0 4.500px; }
.c > i { width: 24px; font-style: normal; color: #9199a1; line-height: 17px; }
.c > i.hot { color: #b06212; }
.first .c > i { margin-top: -.500px; }
.c p { height: 17.300px; line-height: 17.300px; font-family: Gelasio, "Liberation Serif", serif; font-size: 13px; }
.c a, .c u { font: 13px/0 "Liberation Sans", Arial, sans-serif; color: #5a9fd6; }
.c u { color: #9199a1; margin-left: .500px; }
.c u.wrap { margin-left: 0; }
.c .pill { background: #d6d9dc; border-radius: 3px; padding: 1px 5px; }
.c p svg { display: inline-block; vertical-align: 2px; margin: -4px 0 -4px 1px; }
code { font: 13px/0 "Liberation Mono", monospace; background: #e4e6e8; padding: 1px 5px; }
.second .c:nth-child(2) p:nth-child(-n+2) { height: 17.600px; }
.add { color: #bbc0c4; line-height: 16px; margin: 11px 0 0 55px; }
.body .add { margin: 11px 0 0 3px; }
.rule { height: 1px; background: #e4e6e8; margin-top: 16px; }

/* answers */
.anshead { margin-top: 20px; height: 38px; display: flex; align-items: center; justify-content: space-between; }
.anshead h2 { font-size: 18px; line-height: 36px; }
.sort { display: flex; height: 38px; width: 172px; border: 1px solid #9199a1; border-radius: 3px; line-height: 36px; text-align: center; color: #6a737c; }
.sort span { flex: 0 0 57px; border-right: 1px solid #9199a1; }
.sort span:nth-child(2) { flex-basis: 60px; }
.sort .sel { flex: 1; border-right: 0; background: #e4e6e8; color: #3b4045; }

.post { display: flex; padding-top: 24px; }
.vote { width: 36px; margin-right: 16px; padding-top: 10px; display: flex; flex-direction: column; align-items: center; }
.vote b { font-weight: 400; font-size: 21px; line-height: 24px; color: #6a737c; margin: 15px 0 16px; }
.v3 { margin-top: 16px; }
.v4 { margin-top: 22px; }
.body { width: 658px; padding-top: 1px; }
.body > p { height: 22.400px; line-height: 22.400px; font-family: Gelasio, "Liberation Serif", serif; font-size: 15px; }

/* inline formulas: each has the measure of its set width */
.m { font-family: "Liberation Serif", serif; font-size: 17.500px; line-height: 0; display: inline-block; text-align: justify; text-align-last: justify; }
.m sub { font-size: 72%; vertical-align: -3px; line-height: 0; }
.m .wide { letter-spacing: 1.500px; }
.m q { quotes: none; font-family: "DejaVu Sans", sans-serif; font-size: 17px; font-weight: 200; }
.m q::before, .m q::after { content: none; }
.w9 { width: 9.500px; }
.w10 { width: 10.500px; }
.w32 { width: 33px; letter-spacing: .900px; }
.w35 { width: 34px; }
.w39 { width: 39.500px; }
.w42 { width: 42.500px; }
.w43 { width: 43.500px; }
.w68 { width: 68px; }
.w92 { width: 92px; }
.w108 { width: 108px; }
.w118 { width: 118px; }
.w129 { width: 129.500px; }
.c .m { font-size: 15.500px; }

.eq { margin: 15px 0 0 242px; height: 48px; display: flex; align-items: center; font: 19px/24px "Liberation Serif", serif; }
.paren { width: 10px; font-size: 48px; line-height: 44px; transform: translateX(-2px) scaleX(.72); transform-origin: 0 50%; margin-top: -5px; }
.stack, .frac { display: flex; flex-direction: column; align-items: center; width: 44px; word-spacing: 1px; }
.eqs { margin-left: 9px; width: 21px; font-size: 23px; }
.frac { width: 70px; word-spacing: 2px; }
.frac span { width: 70px; text-align: center; }
.frac span:first-child { border-bottom: 1px solid #242729; }
.dot { margin-left: 8px; }

.foot { display: flex; justify-content: space-between; margin-top: 27px; color: #6a737c; line-height: 16px; }
.acts { display: flex; gap: 8px; }
.card { width: 193px; padding-top: 3px; font-size: 12px; }
.who { display: flex; gap: 8px; margin-top: 4px; }
.who a { display: block; font-size: 13px; line-height: 18px; color: #5a9fd6; }
.rep { display: flex; align-items: center; line-height: 15px; color: #848d95; margin-top: 1px; }
.rep b { color: #6a737c; }
.rep svg { margin: 0 3px 0 6.500px; }
.comments.second { margin-top: 19px; }

/* sidebar */
.side { margin-left: 24px; width: 300px; color: #1b3f66; }
.rel1 { display: flex; line-height: 17px; margin-top: -1px; }
.rel1 .m { line-height: 15px; font-size: 15.500px; vertical-align: 1px; }
.num { width: 38px; height: 18px; margin-right: 10px; background: #eff0f1; color: #525960; text-align: center; font-size: 12px; line-height: 17px; border-radius: 0 0 2px 2px; }
.side h3 { font-size: 18px; line-height: 24px; color: #3b4045; margin-top: 20px; }
.side ul { list-style: none; margin-top: 18.400px; display: flex; flex-direction: column; gap: 10px; }
.side li { display: flex; gap: 6px; min-height: 18px; font-size: 12px; line-height: 15.600px; }
.side li svg { width: 16px; height: 16px; margin-top: 1px; }
.side text { font: bold 7.500px "Liberation Sans", sans-serif; fill: #fff; text-anchor: middle; }
```
